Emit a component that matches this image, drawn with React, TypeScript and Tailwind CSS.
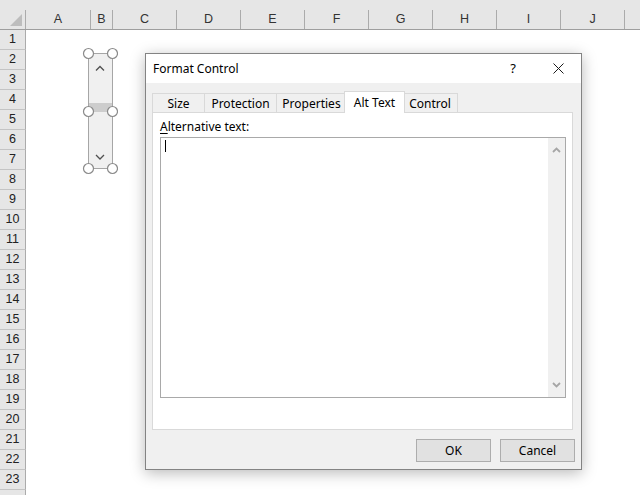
import React from 'react';

const columns = [
  { label: 'A', cls: 'w-[65px]' },
  { label: 'B', cls: 'w-[22px]' },
  { label: 'C', cls: 'w-[64px]' },
  { label: 'D', cls: 'w-[64px]' },
  { label: 'E', cls: 'w-[64px]' },
  { label: 'F', cls: 'w-[64px]' },
  { label: 'G', cls: 'w-[64px]' },
  { label: 'H', cls: 'w-[64px]' },
  { label: 'I', cls: 'w-[64px]' },
  { label: 'J', cls: 'w-[64px]' },
  { label: '', cls: 'w-[64px]' },
];

const rows = Array.from({ length: 23 }, (_, i) => i + 1);

const tabs = [
  { label: 'Size', cls: 'w-[53px]' },
  { label: 'Protection', cls: 'w-[73px] -ml-px' },
  { label: 'Properties', cls: 'w-[71px] -ml-px' },
  { label: 'Alt Text', cls: 'w-[61px] -ml-[3px]', active: true },
  { label: 'Control', cls: 'w-[56px] -ml-[3px]' },
];

const SpinControl: React.FC = () => (
  <svg className="absolute left-[82px] top-[47px]" width="36" height="128" viewBox="0 0 36 128">
    <rect x="6.5" y="6.5" width="24" height="115" fill="#f0f0f0" stroke="#a6a6a6" />
    <rect x="7" y="56" width="23" height="9" fill="#cdcdcd" />
    <path d="M14 23.5 L18 19.5 L22 23.5" fill="none" stroke="#505050" strokeWidth="1.3" />
    <path d="M14 108 L18 112 L22 108" fill="none" stroke="#505050" strokeWidth="1.3" />
    {[
      [6.5, 6.5],
      [30.5, 6.5],
      [6.5, 64.5],
      [30.5, 64.5],
      [6.5, 121.5],
      [30.5, 121.5],
    ].map(([cx, cy]) => (
      <circle key={`${cx}-${cy}`} cx={cx} cy={cy} r="5" fill="#ffffff" stroke="#8a8a8a" strokeWidth="1.2" />
    ))}
  </svg>
);

const FormatDialog: React.FC = () => (
  <div
    className="absolute left-[145px] top-[53px] w-[437px] h-[417px] flex flex-col border border-[#838383] bg-[#f0f0f0] shadow-[0_3px_14px_rgba(0,0,0,0.28)] text-[12px] text-black"
    style={{ fontFamily: '"Noto Sans", "Liberation Sans", sans-serif' }}
  >
    {/* Title bar */}
    <div className="h-[29px] bg-white flex items-center pl-[7px]">
      <span className="flex-1">Format Control</span>
      <span className="w-[14px] text-center text-[13px] mr-[33px]">?</span>
      <svg width="11" height="11" viewBox="0 0 11 11" className="mr-[17px]">
        <path d="M0.5 0.5 L10.5 10.5 M10.5 0.5 L0.5 10.5" stroke="#1a1a1a" strokeWidth="1" />
      </svg>
    </div>

    {/* Body */}
    <div className="flex-1 flex flex-col px-[6px] pt-[8px] pb-[7px]">
      <div className="flex items-end h-[21px]">
        {tabs.map((t) =>
          t.active ? (
            <div
              key={t.label}
              className={`${t.cls} relative z-10 h-[22px] -mb-px bg-white border border-b-0 border-[#d9d9d9] flex items-center justify-center`}
            >
              {t.label}
            </div>
          ) : (
            <div
              key={t.label}
              className={`${t.cls} h-[19px] pt-[2px] bg-[#f0f0f0] border border-b-0 border-[#d9d9d9] flex items-center justify-center`}
            >
              {t.label}
            </div>
          )
        )}
      </div>

      <div className="w-[421px] h-[318px] bg-white border border-[#d9d9d9] pl-[7px] pt-[6px]">
        <div className="leading-[16px]">
          <span className="underline underline-offset-2">A</span>lternative text:
        </div>
        <div className="mt-[2px] w-[406px] h-[261px] border border-[#a9a9a9] flex">
          <div className="flex-1 pl-[4px] pt-[2px]">
            <div className="w-px h-[12px] bg-black" />
          </div>
          <div className="w-[17px] bg-[#f0f0f0] flex flex-col items-center justify-between pt-[9px] pb-[9px]">
            <svg width="9" height="6" viewBox="0 0 9 6">
              <path d="M1 5 L4.5 1.5 L8 5" fill="none" stroke="#a6a6a6" strokeWidth="1.8" />
            </svg>
            <svg width="9" height="6" viewBox="0 0 9 6">
              <path d="M1 1 L4.5 4.5 L8 1" fill="none" stroke="#a6a6a6" strokeWidth="1.8" />
            </svg>
          </div>
        </div>
      </div>

      <div className="flex justify-end gap-[9px] mt-[9px]">
        <button className="w-[75px] h-[23px] bg-[#e1e1e1] border border-[#adadad] text-[12px]">OK</button>
        <button className="w-[75px] h-[23px] bg-[#e1e1e1] border border-[#adadad] text-[12px]">Cancel</button>
      </div>
    </div>
  </div>
);

export default function App() {
  return (
    <div
      className="relative w-[640px] h-[495px] overflow-hidden bg-white"
      style={{ fontFamily: '"Liberation Sans", Arial, sans-serif' }}
    >
      {/* Column headers */}
      <div className="flex h-[30px] pt-[10px] bg-[#e6e6e6] border-b border-[#9e9e9e] text-[12.5px] text-[#333]">
        <div className="w-[26px] h-full shrink-0 border-r border-[#ababab] relative">
          <svg className="absolute left-[10px] top-[4px]" width="12" height="12" viewBox="0 0 12 12">
            <path d="M12 0 L12 12 L0 12 Z" fill="#bdbdbd" />
          </svg>
        </div>
        {columns.map((c, i) => (
          <div
            key={i}
            className={`${c.cls} h-full shrink-0 border-r border-[#ababab] flex items-center justify-center`}
          >
            {c.label}
          </div>
        ))}
      </div>

      {/* Rows */}
      {rows.map((r) => (
        <div key={r} className="flex h-[20px]">
          <div className="w-[26px] shrink-0 bg-[#e6e6e6] border-r border-b border-r-[#ababab] border-b-[#c4c4c4] flex items-center justify-center text-[12.5px] text-[#222]">
            {r}
          </div>
          <div className="flex-1" />
        </div>
      ))}
      <div className="flex h-[20px]">
        <div className="w-[26px] shrink-0 bg-[#e6e6e6] border-r border-[#ababab]" />
        <div className="flex-1" />
      </div>

      <SpinControl />
      <FormatDialog />
    </div>
  );
}
